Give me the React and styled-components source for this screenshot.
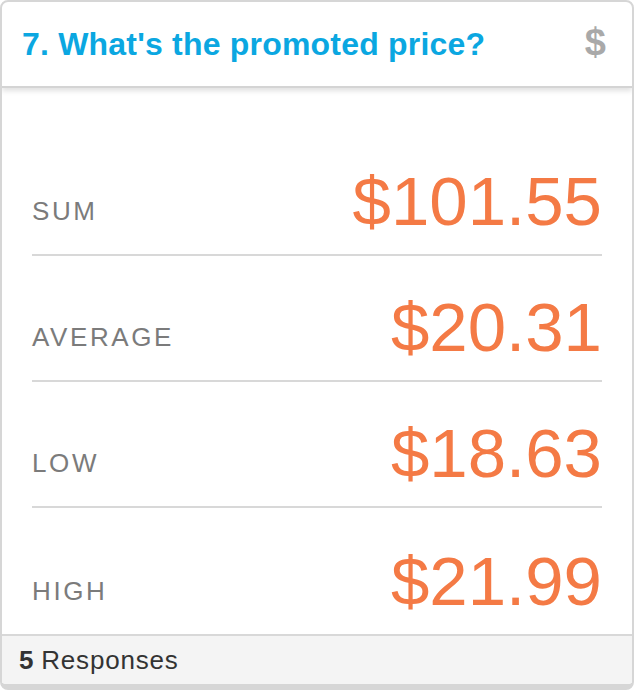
import React from "react";
import styled, { createGlobalStyle } from "styled-components";

const Global = createGlobalStyle`
  html, body { margin: 0; padding: 0; background: #fff; }
  body { font-family: "Liberation Sans", Arial, Helvetica, sans-serif; }
  * { box-sizing: border-box; }
`;

const Card = styled.div`
  width: 634px;
  height: 690px;
  border: 2px solid #d6d6d6;
  border-bottom-width: 6px;
  border-radius: 8px;
  overflow: hidden;
  display: flex;
  flex-direction: column;
  background: #fff;
`;

const Header = styled.div`
  height: 86px;
  flex: none;
  display: flex;
  align-items: center;
  justify-content: space-between;
  padding: 0 26px 0 20px;
  border-bottom: 2px solid #d4d4d4;
  box-shadow: 0 3px 5px rgba(0, 0, 0, 0.12);
  position: relative;
  z-index: 1;
`;

const Title = styled.h2`
  margin: 0;
  font-size: 32px;
  font-weight: 700;
  color: #0ba7e1;
  letter-spacing: 0.2px;
`;

const Icon = styled.span`
  font-size: 38px;
  font-weight: 700;
  color: #a9a9a9;
  line-height: 1;
  margin-top: -4px;
`;

const Body = styled.div`
  flex: 1;
  padding: 42px 30px 0;
`;

const Row = styled.div`
  height: 126px;
  display: flex;
  align-items: flex-end;
  justify-content: space-between;
  padding-bottom: 18px;
  border-bottom: ${(p) => (p.$last ? "none" : "2px solid #d8d8d8")};
`;

const Label = styled.span`
  font-size: 26px;
  line-height: 1;
  letter-spacing: 2.6px;
  color: #7b7b7b;
  text-transform: uppercase;
  padding-bottom: 12px;
`;

const Value = styled.span`
  font-size: 69px;
  line-height: 1;
  color: #f47a45;
`;

const Footer = styled.div`
  height: 50px;
  flex: none;
  border-top: 2px solid #d8d8d8;
  background: #f4f4f4;
  display: flex;
  align-items: center;
  padding: 0 16px 0 17px;
  font-size: 26px;
  letter-spacing: 0.8px;
  color: #333;
`;

const Count = styled.b`
  font-weight: 700;
  margin-right: 7px;
`;

const rows = [
  ["Sum", "$101.55"],
  ["Average", "$20.31"],
  ["Low", "$18.63"],
  ["High", "$21.99"],
];

export default function App() {
  return (
    <>
      <Global />
      <Card>
        <Header>
          <Title>7. What's the promoted price?</Title>
          <Icon>$</Icon>
        </Header>
        <Body>
          {rows.map(([label, value], i) => (
            <Row key={label} $last={i === rows.length - 1}>
              <Label>{label}</Label>
              <Value>{value}</Value>
            </Row>
          ))}
        </Body>
        <Footer>
          <Count>5</Count>Responses
        </Footer>
      </Card>
    </>
  );
}
